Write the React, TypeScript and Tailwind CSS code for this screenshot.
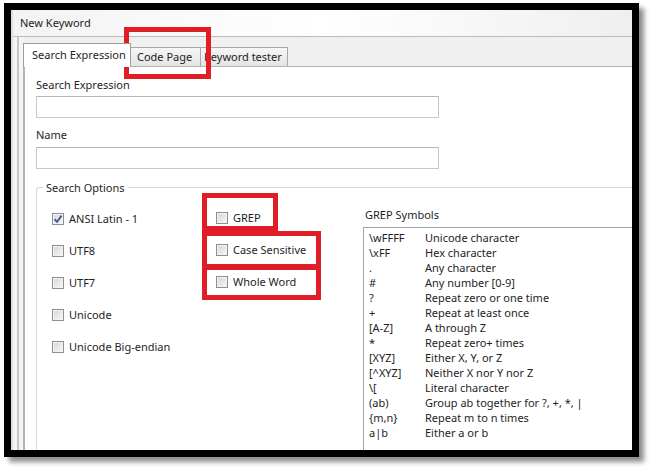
import React from "react";

const font = { fontFamily: '"Noto Sans", "Segoe UI", sans-serif' };

function Check({ checked = false }: { checked?: boolean }) {
  return (
    <span className="relative inline-block w-[12px] h-[12px] shrink-0 border border-[#8e8f8f] bg-gradient-to-br from-[#d6d6d6] to-[#f6f6f6] shadow-[inset_0_0_0_1px_#f4f4f4]">
      {checked && (
        <svg viewBox="0 0 12 12" className="absolute -left-px -top-px w-[12px] h-[12px]">
          <path d="M2.5 6.2 L5 8.8 L9.6 2.6" fill="none" stroke="#3d5a96" strokeWidth="1.8" />
        </svg>
      )}
    </span>
  );
}

function CheckRow({ label, checked }: { label: string; checked?: boolean }) {
  return (
    <div className="flex items-center h-[16px] gap-[5px] text-[11px] text-[#1e1e1e] whitespace-nowrap">
      <Check checked={checked} />
      <span>{label}</span>
    </div>
  );
}

const symbols: [string, string][] = [
  ["\\wFFFF", "Unicode character"],
  ["\\xFF", "Hex character"],
  [".", "Any character"],
  ["#", "Any number [0-9]"],
  ["?", "Repeat zero or one time"],
  ["+", "Repeat at least once"],
  ["[A-Z]", "A through Z"],
  ["*", "Repeat zero+ times"],
  ["[XYZ]", "Either X, Y, or Z"],
  ["[^XYZ]", "Neither X nor Y nor Z"],
  ["\\[", "Literal character"],
  ["(ab)", "Group ab together for ?, +, *, |"],
  ["{m,n}", "Repeat m to n times"],
  ["a|b", "Either a or b"],
];

function RedBox({ className }: { className: string }) {
  return <div className={`absolute border-[5px] border-[#e11d27] ${className}`} />;
}

export default function App() {
  return (
    <div className="relative w-[651px] h-[470px] bg-white overflow-hidden" style={font}>
      <div className="ml-[4px] mt-[3px] w-[635px] h-[454px] border-[7px] border-black shadow-[5px_5px_5px_rgba(0,0,0,0.45)] overflow-hidden">
        <div className="w-full h-full flex flex-col border-l-2 border-[#dedede] bg-white">
          {/* title */}
          <div className="h-[26px] shrink-0 flex items-center pl-[7px] text-[11px] text-[#1e1e1e] bg-gradient-to-r from-[#f3f3f3] via-white to-[#efefef]">
            New Keyword
          </div>
          <div className="flex-1 flex flex-col border-t border-[#bcbcbc] bg-[#f4f4f4] pl-[4px]">
            <div className="flex-1 flex flex-col border-l-2 border-[#c6c6c6] pl-[4px]">
              {/* tabs */}
              <div className="h-[29px] shrink-0 flex items-end bg-[#f0f0f0] text-[11px] text-[#1e1e1e]">
                <div className="relative z-10 -mb-px h-[24px] w-[108px] bg-white border border-b-0 border-[#9d9d9d] pl-[8px] flex items-center whitespace-nowrap">
                  Search Expression
                </div>
                <div className="h-[19px] w-[70px] border border-b-0 border-l-0 border-[#a9a9a9] bg-gradient-to-b from-[#f6f6f6] to-[#e4e4e4] pl-[6px] flex items-center whitespace-nowrap">
                  Code Page
                </div>
                <div className="h-[19px] w-[87px] border border-b-0 border-l-0 border-[#a9a9a9] bg-gradient-to-b from-[#f6f6f6] to-[#e4e4e4] pl-[3px] flex items-center whitespace-nowrap">
                  Keyword tester
                </div>
              </div>
              {/* panel */}
              <div className="flex-1 bg-white border-t border-l-2 border-[#b4b4b4] pl-[11px] pt-[10px] text-[11px] text-[#1e1e1e]">
                <div className="h-[15px] leading-[15px]">Search Expression</div>
                <div className="mt-[4px] w-[403px] h-[22px] border border-[#c8c8c8] border-t-[#b8b8b8] bg-white" />
                <div className="mt-[9px] h-[15px] leading-[15px]">Name</div>
                <div className="mt-[5px] w-[403px] h-[22px] border border-[#c8c8c8] border-t-[#b8b8b8] bg-white" />

                {/* group box */}
                <div className="mt-[18px] w-[700px] h-[300px] border-t border-l border-[#d8d8d8] rounded-tl-[3px]">
                  <div className="-mt-[8px] ml-[6px] block w-fit px-[3px] h-[15px] leading-[15px] bg-white">
                    Search Options
                  </div>
                  <div className="mt-[12px] flex">
                    <div className="w-[179px] pl-[15px] pt-[4px] flex flex-col gap-[16px]">
                      <CheckRow label="ANSI Latin - 1" checked />
                      <CheckRow label="UTF8" />
                      <CheckRow label="UTF7" />
                      <CheckRow label="Unicode" />
                      <CheckRow label="Unicode Big-endian" />
                    </div>
                    <div className="w-[147px] pt-[3px] flex flex-col gap-[16px]">
                      <CheckRow label="GREP" />
                      <CheckRow label="Case Sensitive" />
                      <CheckRow label="Whole Word" />
                    </div>
                    <div className="flex flex-col">
                      <div className="pl-[2px] h-[15px] leading-[15px]">GREP Symbols</div>
                      <div className="mt-[5px] w-[320px] h-[260px] border border-[#9fa4ab] bg-white pl-[5px] pt-[2px]">
                        {symbols.map(([k, v]) => (
                          <div key={k} className="flex h-[15px] leading-[15px] whitespace-nowrap">
                            <span className="w-[56px] shrink-0">{k}</span>
                            <span>{v}</span>
                          </div>
                        ))}
                      </div>
                    </div>
                  </div>
                </div>
              </div>
            </div>
          </div>
        </div>
      </div>

      <RedBox className="left-[124px] top-[27px] w-[87px] h-[52px]" />
      <RedBox className="left-[202px] top-[193px] w-[76px] h-[38px]" />
      <RedBox className="left-[202px] top-[231px] w-[119px] h-[38px]" />
      <RedBox className="left-[202px] top-[265px] w-[119px] h-[35px]" />
    </div>
  );
}
